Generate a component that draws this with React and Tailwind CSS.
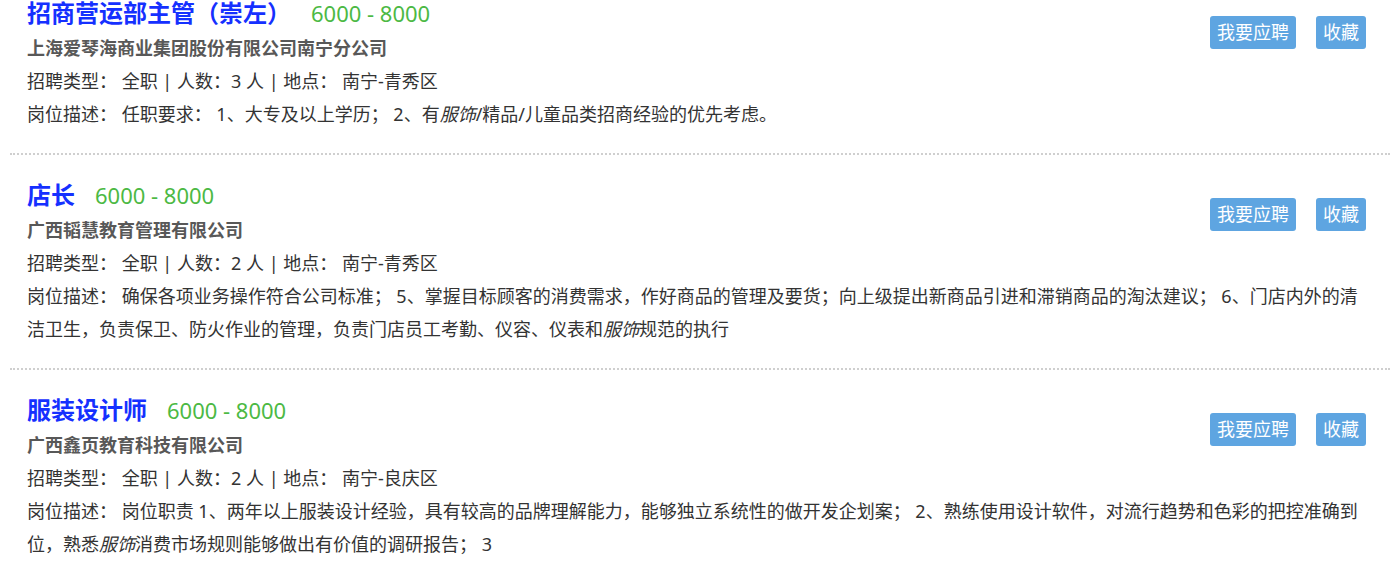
import React from 'react';

const jobs = [
  {
    title: '招商营运部主管（崇左）',
    company: '上海爱琴海商业集团股份有限公司南宁分公司',
    count: 3,
    area: '南宁-青秀区',
    desc: (
      <>
        任职要求： 1、大专及以上学历； 2、有<em>服饰</em>/精品/儿童品类招商经验的优先考虑。
      </>
    ),
  },
  {
    title: '店长',
    company: '广西韬慧教育管理有限公司',
    count: 2,
    area: '南宁-青秀区',
    desc: (
      <>
        确保各项业务操作符合公司标准； 5、掌握目标顾客的消费需求，作好商品的管理及要货；向上级提出新商品引进和滞销商品的淘汰建议； 6、门店内外的清洁卫生，负责保卫、防火作业的管理，负责门店员工考勤、仪容、仪表和<em>服饰</em>规范的执行
      </>
    ),
  },
  {
    title: '服装设计师',
    company: '广西鑫页教育科技有限公司',
    count: 2,
    area: '南宁-良庆区',
    desc: (
      <>
        岗位职责 1、两年以上服装设计经验，具有较高的品牌理解能力，能够独立系统性的做开发企划案； 2、熟练使用设计软件，对流行趋势和色彩的把控准确到位，熟悉<em>服饰</em>消费市场规则能够做出有价值的调研报告； 3
      </>
    ),
  },
];

const JobItem = ({ job }) => (
  <div className="border-b-2 border-dotted border-[#cfcfcf] pl-[17px] pr-[24px] pt-[23px] pb-[22px]">
    {/* title row keeps a fixed height so the buttons can sit lower without pushing text */}
    <div className="flex justify-between items-start h-[36px]">
      <div className="flex items-baseline leading-[34px]">
        <span className="text-[24px] font-bold text-[#1530ff]">{job.title}</span>
        <span className="ml-[20px] text-[22px] text-[#4cb944]">6000 - 8000</span>
      </div>
      <div className="flex gap-[20px] mt-[20px]">
        <button className="h-[33px] px-[7px] rounded-[3px] bg-[#5ea5e1] text-white text-[18px] leading-[33px]">
          我要应聘
        </button>
        <button className="h-[33px] px-[7px] rounded-[3px] bg-[#5ea5e1] text-white text-[18px] leading-[33px]">
          收藏
        </button>
      </div>
    </div>
    <div className="text-[18px] leading-[33px] font-bold text-[#585858]">{job.company}</div>
    <div className="text-[18px] leading-[33px] text-[#333]">
      招聘类型： 全职 | 人数：{job.count} 人 | 地点： {job.area}
    </div>
    <div className="text-[18px] leading-[33px] text-[#333]">
      岗位描述： {job.desc}
    </div>
  </div>
);

const App = () => {
  return (
    <div
      className="bg-white w-[1390px] h-[573px] overflow-hidden"
      style={{ fontFamily: '"Noto Sans", "Noto Sans CJK SC", sans-serif' }}
    >
      <div className="ml-[10px] -mt-[27px]">
        {jobs.map((job, i) => (
          <JobItem key={i} job={job} />
        ))}
      </div>
    </div>
  );
};

export default App;
